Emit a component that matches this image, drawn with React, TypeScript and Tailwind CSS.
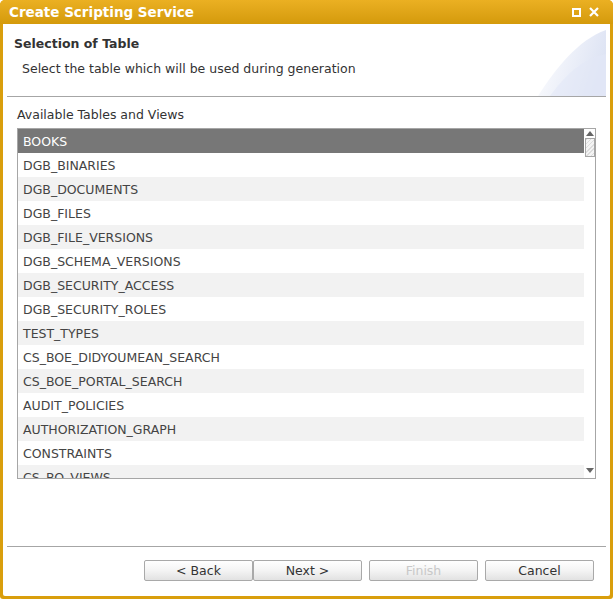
const TABLES = [
  "BOOKS",
  "DGB_BINARIES",
  "DGB_DOCUMENTS",
  "DGB_FILES",
  "DGB_FILE_VERSIONS",
  "DGB_SCHEMA_VERSIONS",
  "DGB_SECURITY_ACCESS",
  "DGB_SECURITY_ROLES",
  "TEST_TYPES",
  "CS_BOE_DIDYOUMEAN_SEARCH",
  "CS_BOE_PORTAL_SEARCH",
  "AUDIT_POLICIES",
  "AUTHORIZATION_GRAPH",
  "CONSTRAINTS",
  "CS_BO_VIEWS",
];

const font = { fontFamily: '"DejaVu Sans", Verdana, sans-serif' };

const WizardButton = ({
  label,
  disabled = false,
}: {
  label: string;
  disabled?: boolean;
}) => (
  <button
    type="button"
    disabled={disabled}
    className={`h-[21px] w-[109px] rounded-[2px] border border-[#a9a9a9] bg-gradient-to-b from-[#ffffff] via-[#f4f4f4] to-[#e2e2e2] text-[12.5px] leading-[19px] ${
      disabled ? "text-[#c8c8c8]" : "text-[#333]"
    }`}
  >
    {label}
  </button>
);

export default function App() {
  return (
    <div className="w-[614px] h-[599px] bg-white" style={font}>
      <div className="w-[613px] h-[599px] flex flex-col rounded-t-[5px] rounded-b-[3px] bg-[#d99e0c] px-[3px] pb-[3px]">
        {/* title bar */}
        <div className="h-[24px] -mx-[3px] px-[9px] rounded-t-[5px] flex items-center justify-between bg-gradient-to-b from-[#ebb022] to-[#d49a0a]">
          <span className="text-white font-bold text-[13.5px]">
            Create Scripting Service
          </span>
          <div className="flex items-center gap-[8px] pr-[5px]">
            <span className="w-[9px] h-[9px] border-[2px] border-white" />
            <svg width="10" height="10" viewBox="0 0 10 10">
              <path d="M1 1 L9 9 M9 1 L1 9" stroke="white" strokeWidth="2.2" />
            </svg>
          </div>
        </div>

        <div className="flex-1 bg-white flex flex-col rounded-b-[2px]">
          {/* header */}
          <div className="relative h-[72px] px-[11px] pt-[12px]">
            <svg
              className="absolute right-[4px] top-[4px]"
              width="68"
              height="68"
              viewBox="0 0 68 68"
            >
              <defs>
                <linearGradient id="sw" x1="0" y1="0" x2="1" y2="0.3">
                  <stop offset="0" stopColor="#ffffff" />
                  <stop offset="1" stopColor="#dee4f4" />
                </linearGradient>
              </defs>
              <path d="M0 68 C18 40 40 12 68 2 L68 68 Z" fill="url(#sw)" />
              <path
                d="M12 68 C28 46 46 30 68 26 L68 68 Z"
                fill="#e3e8f6"
                opacity="0.6"
              />
            </svg>
            <div className="relative text-[12.5px] leading-[16px] font-bold text-[#333]">
              Selection of Table
            </div>
            <div className="relative mt-[9px] pl-[8px] text-[12.5px] leading-[16px] text-[#333]">
              Select the table which will be used during generation
            </div>
          </div>
          <div className="mx-[4px] h-px bg-[#a6a6a6]" />

          {/* list */}
          <div className="px-[14px]">
            <div className="mt-[10px] text-[12.5px] leading-[16px] text-[#333]">
              Available Tables and Views
            </div>
            <div className="mt-[5px] h-[351px] border border-[#a6a6a6] flex overflow-hidden">
              <div className="flex-1 overflow-hidden">
                {TABLES.map((t, i) => (
                  <div
                    key={t}
                    className={`h-[24px] shrink-0 px-[5px] pt-[3px] flex items-center text-[12.5px] ${
                      i === 0
                        ? "bg-[#777777] text-white"
                        : i % 2 === 0
                          ? "bg-[#f2f2f2] text-[#444]"
                          : "bg-white text-[#444]"
                    }`}
                  >
                    {t}
                  </div>
                ))}
              </div>
              <div className="w-[11px] flex flex-col items-center bg-white">
                <div className="h-[9px] flex items-center justify-center">
                  <svg width="8" height="5" viewBox="0 0 8 5">
                    <path d="M0 5 L4 0 L8 5 Z" fill="#666" />
                  </svg>
                </div>
                <div className="w-[10px] h-[19px] border border-[#a6a6a6] bg-[repeating-linear-gradient(135deg,#dcdcdc_0px,#dcdcdc_1px,#f4f4f4_1px,#f4f4f4_3px)]" />
                <div className="flex-1" />
                <div className="h-[12px] flex items-start justify-center pt-[2px]">
                  <svg width="8" height="5" viewBox="0 0 8 5">
                    <path d="M0 0 L8 0 L4 5 Z" fill="#666" />
                  </svg>
                </div>
              </div>
            </div>
          </div>

          <div className="flex-1" />
          <div className="mx-[4px] h-px bg-[#a6a6a6]" />
          <div className="h-[49px] flex items-start justify-end pt-[13px] pr-[16px]">
            <WizardButton label="< Back" />
            <WizardButton label="Next >" />
            <div className="w-[7px]" />
            <WizardButton label="Finish" disabled />
            <div className="w-[7px]" />
            <WizardButton label="Cancel" />
          </div>
        </div>
      </div>
    </div>
  );
}
